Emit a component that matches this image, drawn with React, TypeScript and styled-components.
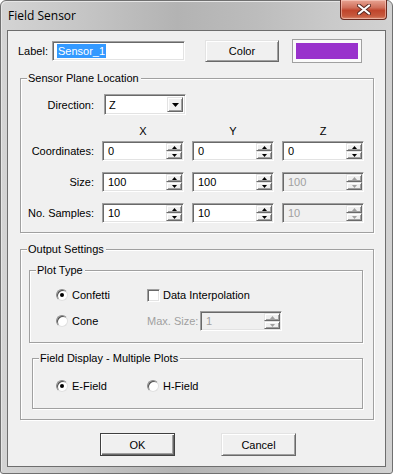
import styled, { createGlobalStyle, css } from "styled-components";

const GlobalStyle = createGlobalStyle`
  html, body {
    margin: 0;
    padding: 0;
    background: #ffffff;
  }
  body {
    font-family: "Liberation Sans", Arial, sans-serif;
    font-size: 11px;
    color: #000;
  }
  * {
    box-sizing: border-box;
  }
`;

const sunken = css`
  border: 1px solid;
  border-color: #a0a0a0 #ffffff #ffffff #a0a0a0;
  box-shadow: inset 1px 1px 0 #696969, inset -1px -1px 0 #e3e3e3;
`;

const raised = css`
  border: 1px solid;
  border-color: #e3e3e3 #696969 #696969 #e3e3e3;
  box-shadow: inset 1px 1px 0 #ffffff, inset -1px -1px 0 #a0a0a0;
`;

function App() {
  return (
    <>
      <GlobalStyle />
      <Window>
        <TitleBar>
          <Title>Field Sensor</Title>
          <CloseButton aria-label="Close">
            <svg width="14" height="11" viewBox="0 0 14 11">
              <path
                d="M2 1.5 L12 9.5 M12 1.5 L2 9.5"
                stroke="#5a2a22"
                strokeWidth="4"
                strokeLinecap="round"
              />
              <path
                d="M2 1.5 L12 9.5 M12 1.5 L2 9.5"
                stroke="#ffffff"
                strokeWidth="2.2"
                strokeLinecap="round"
              />
            </svg>
          </CloseButton>
        </TitleBar>
        <Client>
          <TopRow>
            <FieldLabel>Label:</FieldLabel>
            <TextBox>
              <Selected>Sensor_1</Selected>
            </TextBox>
            <PushButton $width={74} $height={22} style={{ marginLeft: 20 }}>
              Color
            </PushButton>
            <Swatch>
              <SwatchFill />
            </Swatch>
          </TopRow>

          <Group $left={12} $width={354} $height={155} $top={15}>
            <Legend>Sensor Plane Location</Legend>
            <GridRow $top={15}>
              <RowLabel>Direction:</RowLabel>
              <Combo>
                <ComboText>Z</ComboText>
                <ComboButton>
                  <svg width="7" height="4" viewBox="0 0 7 4">
                    <path d="M0 0 H7 L3.5 4 Z" fill="#000" />
                  </svg>
                </ComboButton>
              </Combo>
            </GridRow>
            <GridRow $top={10} $height={14}>
              <span />
              <ColHead>X</ColHead>
              <ColHead>Y</ColHead>
              <ColHead>Z</ColHead>
            </GridRow>
            <GridRow $top={3}>
              <RowLabel>Coordinates:</RowLabel>
              <Spinner value="0" />
              <Spinner value="0" />
              <Spinner value="0" />
            </GridRow>
            <GridRow $top={11}>
              <RowLabel>Size:</RowLabel>
              <Spinner value="100" />
              <Spinner value="100" />
              <Spinner value="100" disabled />
            </GridRow>
            <GridRow $top={11}>
              <RowLabel>No. Samples:</RowLabel>
              <Spinner value="10" />
              <Spinner value="10" />
              <Spinner value="10" disabled />
            </GridRow>
          </Group>

          <Group $left={12} $width={354} $height={171} $top={16}>
            <Legend>Output Settings</Legend>
            <Group $left={8} $width={334} $height={73} $top={20}>
              <Legend>Plot Type</Legend>
              <OptionRow $top={14} $left={26}>
                <Option $width={91}>
                  <Radio $checked />
                  Confetti
                </Option>
                <Option>
                  <Check />
                  Data Interpolation
                </Option>
              </OptionRow>
              <OptionRow $top={6} $left={26}>
                <Option $width={91}>
                  <Radio />
                  Cone
                </Option>
                <Option $disabled>
                  <InlineLabel>Max. Size:</InlineLabel>
                  <Spinner value="1" disabled width={82} />
                </Option>
              </OptionRow>
            </Group>
            <Group $left={11} $width={331} $height={51} $top={15}>
              <Legend>Field Display - Multiple Plots</Legend>
              <OptionRow $top={17} $left={23}>
                <Option $width={91}>
                  <Radio $checked />
                  E-Field
                </Option>
                <Option>
                  <Radio />
                  H-Field
                </Option>
              </OptionRow>
            </Group>
          </Group>

          <ButtonRow>
            <PushButton $width={75} $height={23} $default>
              OK
            </PushButton>
            <PushButton $width={75} $height={23}>
              Cancel
            </PushButton>
          </ButtonRow>
        </Client>
      </Window>
    </>
  );
}

interface SpinnerProps {
  value: string;
  disabled?: boolean;
  width?: number;
}

function Spinner({ value, disabled, width = 82 }: SpinnerProps) {
  return (
    <SpinBox $disabled={disabled} style={{ width }}>
      <SpinText>{value}</SpinText>
      <SpinButtons>
        <SpinArrow $disabled={disabled}>
          <svg width="5" height="3" viewBox="0 0 5 3">
            <path d="M2.5 0 L5 3 H0 Z" fill="currentColor" />
          </svg>
        </SpinArrow>
        <SpinArrow $disabled={disabled}>
          <svg width="5" height="3" viewBox="0 0 5 3">
            <path d="M0 0 H5 L2.5 3 Z" fill="currentColor" />
          </svg>
        </SpinArrow>
      </SpinButtons>
    </SpinBox>
  );
}

const Window = styled.div`
  width: 393px;
  height: 474px;
  border: 1px solid #707070;
  border-radius: 6px 6px 3px 3px;
  padding: 0 6px 6px 6px;
  display: flex;
  flex-direction: column;
  background: linear-gradient(
    to right,
    #d4d4d4 0%,
    #c6c6c6 20%,
    #b3b3b3 45%,
    #bcbcbc 65%,
    #cacaca 85%,
    #d2d2d2 100%
  );
  box-shadow: inset 1px 1px 0 #e6e6e6;
`;

const TitleBar = styled.div`
  height: 29px;
  display: flex;
  align-items: flex-start;
  justify-content: space-between;
`;

const Title = styled.div`
  font-family: "Open Sans", "Liberation Sans", sans-serif;
  font-size: 12px;
  padding: 6px 0 0 1px;
  color: #000;
`;

const CloseButton = styled.div`
  width: 47px;
  height: 20px;
  margin-right: -1px;
  margin-top: -1px;
  border: 1px solid #6a2a20;
  border-top: none;
  border-radius: 0 0 4px 4px;
  background: linear-gradient(
    to bottom,
    #e8a493 0%,
    #d0705b 40%,
    #c0452c 55%,
    #c75a3e 85%,
    #d98a70 100%
  );
  box-shadow: inset 0 0 0 1px rgba(255, 220, 210, 0.5);
  display: flex;
  align-items: center;
  justify-content: center;
`;

const Client = styled.div`
  flex: 1;
  background: #f0f0f0;
  border: 1px solid #6e6e6e;
  display: flex;
  flex-direction: column;
`;

const TopRow = styled.div`
  display: flex;
  align-items: center;
  height: 24px;
  margin-top: 8px;
  padding-left: 10px;
`;

const FieldLabel = styled.span`
  width: 34px;
`;

const TextBox = styled.div`
  ${sunken};
  width: 133px;
  height: 20px;
  background: #fff;
  display: flex;
  align-items: center;
  padding-left: 4px;
`;

const Selected = styled.span`
  background: #3399ff;
  color: #fff;
  line-height: 14px;
  padding: 0 1px;
`;

const PushButton = styled.div<{
  $width: number;
  $height: number;
  $default?: boolean;
}>`
  width: ${(p) => p.$width}px;
  height: ${(p) => p.$height}px;
  background: #f0f0f0;
  display: flex;
  align-items: center;
  justify-content: center;
  ${raised};
  ${(p) =>
    p.$default &&
    css`
      border-color: #404040;
      box-shadow: inset 1px 1px 0 #ffffff, inset -1px -1px 0 #696969,
        inset -2px -2px 0 #a0a0a0;
    `}
`;

const Swatch = styled.div`
  width: 70px;
  height: 24px;
  margin-left: 13px;
  border: 1px solid #a0a0a0;
  background: #fafafa;
  padding: 3px;
`;

const SwatchFill = styled.div`
  width: 100%;
  height: 100%;
  background: #9932cc;
`;

const Group = styled.div<{
  $left: number;
  $width: number;
  $height: number;
  $top: number;
}>`
  position: relative;
  margin-left: ${(p) => p.$left}px;
  margin-top: ${(p) => p.$top}px;
  width: ${(p) => p.$width}px;
  height: ${(p) => p.$height}px;
  border: 1px solid #a0a0a0;
  box-shadow: inset 1px 1px 0 #ffffff, 1px 1px 0 #ffffff;
  display: flex;
  flex-direction: column;
  flex-shrink: 0;
`;

const Legend = styled.span`
  position: absolute;
  top: -8px;
  left: 6px;
  padding: 0 2px 0 1px;
  background: #f0f0f0;
  line-height: 14px;
`;

const GridRow = styled.div<{ $top: number; $height?: number }>`
  display: grid;
  grid-template-columns: 73px 82px 82px 82px;
  column-gap: 8px;
  margin-top: ${(p) => p.$top}px;
  height: ${(p) => p.$height ?? 20}px;
  align-items: center;
`;

const RowLabel = styled.span`
  text-align: right;
`;

const ColHead = styled.span`
  text-align: center;
  line-height: 14px;
`;

const Combo = styled.div`
  ${sunken};
  height: 21px;
  margin-left: 2px;
  width: 82px;
  background: #fff;
  display: flex;
  align-items: center;
  padding: 2px;
`;

const ComboText = styled.span`
  flex: 1;
  padding-left: 2px;
`;

const ComboButton = styled.div`
  ${raised};
  width: 16px;
  height: 100%;
  background: #f0f0f0;
  display: flex;
  align-items: center;
  justify-content: center;
`;

const SpinBox = styled.div<{ $disabled?: boolean }>`
  ${sunken};
  height: 20px;
  flex-shrink: 0;
  display: flex;
  align-items: stretch;
  background: ${(p) => (p.$disabled ? "#f0f0f0" : "#ffffff")};
  color: ${(p) => (p.$disabled ? "#a0a0a0" : "#000")};
  padding: 1px 1px 1px 2px;
`;

const SpinText = styled.span`
  flex: 1;
  display: flex;
  align-items: center;
  padding-left: 3px;
`;

const SpinButtons = styled.div`
  width: 16px;
  display: flex;
  flex-direction: column;
`;

const SpinArrow = styled.div<{ $disabled?: boolean }>`
  ${raised};
  flex: 1;
  background: #f0f0f0;
  display: flex;
  align-items: center;
  justify-content: center;
  color: ${(p) => (p.$disabled ? "#a0a0a0" : "#000")};
`;

const OptionRow = styled.div<{ $top: number; $left: number }>`
  display: flex;
  align-items: center;
  height: 20px;
  margin-top: ${(p) => p.$top}px;
  padding-left: ${(p) => p.$left}px;
`;

const Option = styled.div<{ $width?: number; $disabled?: boolean }>`
  display: flex;
  align-items: center;
  gap: 4px;
  white-space: nowrap;
  flex-shrink: 0;
  width: ${(p) => (p.$width ? `${p.$width}px` : "auto")};
  color: ${(p) => (p.$disabled ? "#a0a0a0" : "#000")};
`;

const InlineLabel = styled.span`
  width: 49px;
  flex-shrink: 0;
  white-space: nowrap;
`;

const Radio = styled.span<{ $checked?: boolean }>`
  width: 12px;
  height: 12px;
  flex-shrink: 0;
  border-radius: 50%;
  border: 1px solid #8a8a8a;
  border-right-color: #e0e0e0;
  border-bottom-color: #e0e0e0;
  background: #fff;
  box-shadow: inset 1px 1px 0 #505050;
  display: inline-flex;
  align-items: center;
  justify-content: center;
  &::after {
    content: "";
    width: 4px;
    height: 4px;
    border-radius: 50%;
    background: ${(p) => (p.$checked ? "#000" : "transparent")};
  }
`;

const Check = styled.span`
  width: 13px;
  height: 13px;
  flex-shrink: 0;
  ${sunken};
  background: #fff;
  margin-right: -1px;
`;

const ButtonRow = styled.div`
  display: flex;
  gap: 46px;
  margin-top: 13px;
  padding-left: 92px;
`;

export default App;
